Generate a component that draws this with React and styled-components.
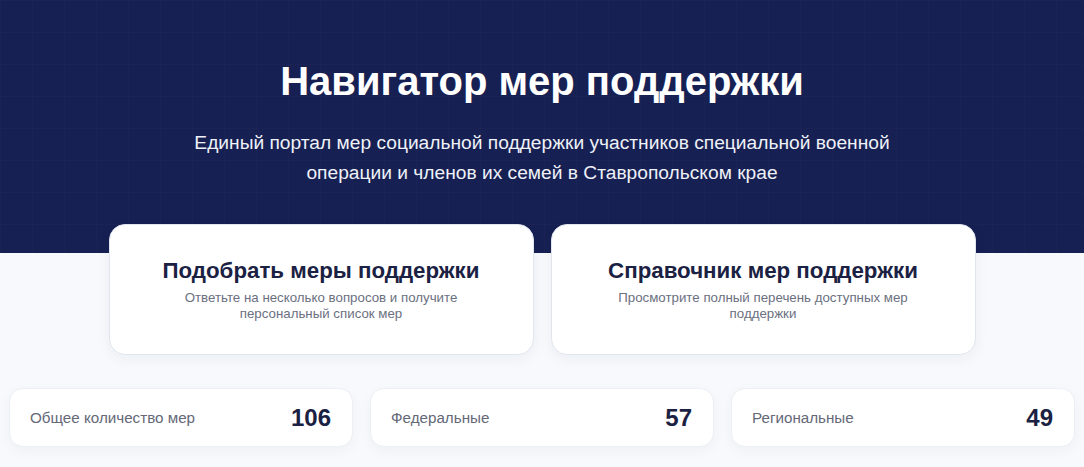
import React from "react";
import styled, { createGlobalStyle } from "styled-components";

const GlobalStyle = createGlobalStyle`
  * { box-sizing: border-box; }
  body {
    margin: 0;
    background: #f7f9fc;
    font-family: "Liberation Sans", Arial, sans-serif;
  }
`;

const actions = [
  {
    title: "Подобрать меры поддержки",
    text: "Ответьте на несколько вопросов и получите персональный список мер",
  },
  {
    title: "Справочник мер поддержки",
    text: "Просмотрите полный перечень доступных мер поддержки",
  },
];

const stats = [
  { label: "Общее количество мер", value: 106 },
  { label: "Федеральные", value: 57 },
  { label: "Региональные", value: 49 },
];

const App = () => {
  return (
    <Page>
      <GlobalStyle />
      <Hero>
        <Title>Навигатор мер поддержки</Title>
        <Lead>
          Единый портал мер социальной поддержки участников специальной военной
          операции и членов их семей в Ставропольском крае
        </Lead>
      </Hero>
      <Actions>
        {actions.map((a) => (
          <ActionCard key={a.title}>
            <CardTitle>{a.title}</CardTitle>
            <CardText>{a.text}</CardText>
          </ActionCard>
        ))}
      </Actions>
      <Stats>
        {stats.map((s) => (
          <StatCard key={s.label}>
            <StatLabel>{s.label}</StatLabel>
            <StatValue>{s.value}</StatValue>
          </StatCard>
        ))}
      </Stats>
    </Page>
  );
};

const Page = styled.div`
  min-height: 467px;
  background: #f7f9fc;
`;

const Hero = styled.header`
  height: 253px;
  padding: 57px 20px 0;
  text-align: center;
  color: #ffffff;
  background-color: #172052;
  background-image:
    linear-gradient(rgba(255, 255, 255, 0.015) 1px, transparent 1px),
    linear-gradient(90deg, rgba(255, 255, 255, 0.015) 1px, transparent 1px);
  background-size: 32px 32px;
`;

const Title = styled.h1`
  margin: 0;
  font-size: 40px;
  line-height: 48px;
  font-weight: 700;
`;

const Lead = styled.p`
  margin: 23px auto 0;
  max-width: 760px;
  font-size: 19.2px;
  line-height: 30px;
  color: #eef1f8;
`;

const Actions = styled.section`
  display: grid;
  grid-template-columns: repeat(2, 425px);
  gap: 17px;
  justify-content: center;
  margin-top: -29px;
`;

const ActionCard = styled.div`
  height: 131px;
  padding: 33px 24px 0;
  background: #ffffff;
  border: 1px solid #e1e5ee;
  border-radius: 16px;
  box-shadow: 0 4px 14px rgba(23, 32, 82, 0.05);
  text-align: center;
`;

const CardTitle = styled.h2`
  margin: 0;
  font-size: 22.3px;
  line-height: 26px;
  font-weight: 700;
  color: #1b2142;
`;

const CardText = styled.p`
  margin: 6px auto 0;
  max-width: 310px;
  font-size: 13.3px;
  line-height: 16px;
  color: #6b7080;
`;

const Stats = styled.section`
  display: grid;
  grid-template-columns: repeat(3, 344px);
  gap: 17px;
  justify-content: center;
  margin-top: 33px;
`;

const StatCard = styled.div`
  height: 59px;
  display: flex;
  align-items: center;
  justify-content: space-between;
  padding: 0 21px 0 20px;
  background: #ffffff;
  border: 1px solid #eceff5;
  border-radius: 14px;
  box-shadow: 0 4px 14px rgba(23, 32, 82, 0.04);
`;

const StatLabel = styled.span`
  font-size: 15.2px;
  color: #646877;
`;

const StatValue = styled.span`
  font-size: 24px;
  font-weight: 700;
  color: #1b2142;
`;

export default App;
